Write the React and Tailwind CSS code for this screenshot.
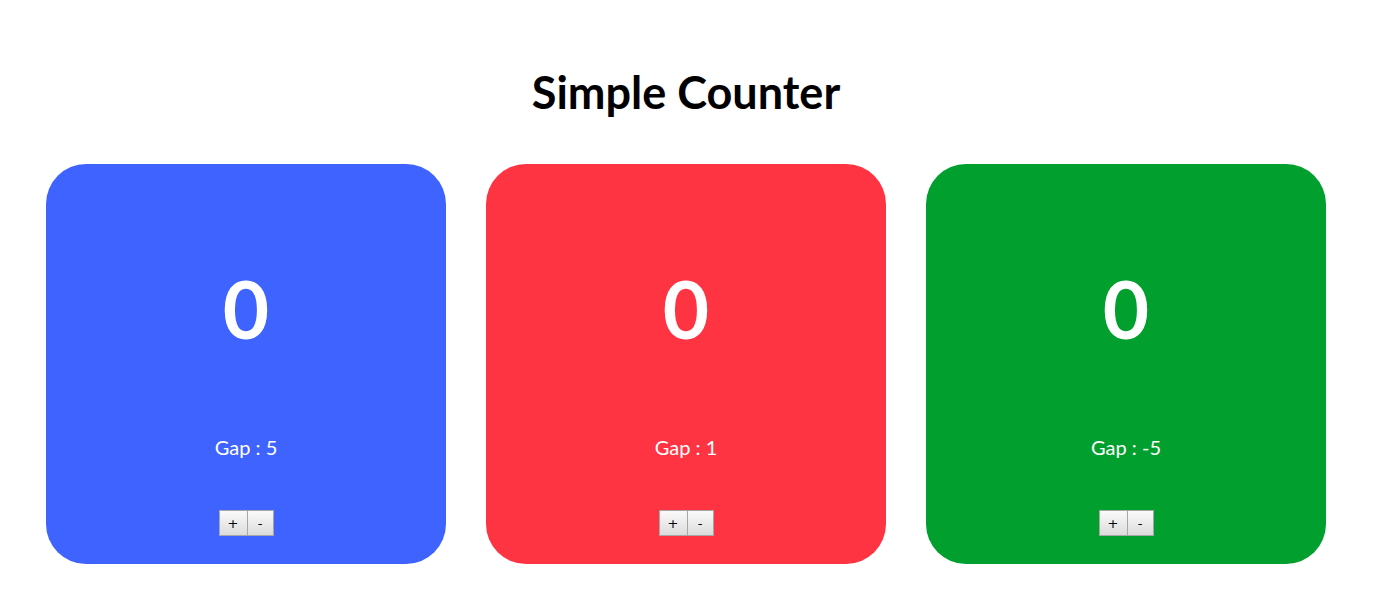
import { useState } from 'react'

const cards = [
  { color: 'bg-[#3f63fe]', gap: 5 },
  { color: 'bg-[#ff3443]', gap: 1 },
  { color: 'bg-[#019f2e]', gap: -5 },
]

function Counter({ color, gap }) {
  const [count, setCount] = useState(0)

  return (
    <div className={`${color} w-[400px] h-[400px] rounded-[40px] flex flex-col items-center text-white`}>
      <div className="h-[250px] pt-[38px] flex items-center justify-center">
        <span className="text-[80px] font-bold leading-none">{count}</span>
      </div>
      <p className="mt-[19px] text-[20px] leading-[28px]">Gap : {gap}</p>
      <div className="mt-[49px] flex font-['DejaVu_Sans',sans-serif]">
        <button
          onClick={() => setCount(count + gap)}
          className="w-[29px] h-[26px] text-black text-[13px] font-normal leading-none border border-[#a6a6a6] bg-gradient-to-b from-[#fafafa] to-[#dcdcdc]"
        >
          +
        </button>
        <button
          onClick={() => setCount(count - gap)}
          className="w-[26px] h-[26px] text-black text-[13px] font-normal leading-none border border-[#a6a6a6] border-l-0 bg-gradient-to-b from-[#fafafa] to-[#dcdcdc]"
        >
          -
        </button>
      </div>
    </div>
  )
}

export default function App() {
  return (
    <div className="min-h-screen bg-white font-['Lato',sans-serif]">
      <div className="w-[1372px]">
        <h1 className="pt-[65px] text-center text-[45px] font-bold leading-[54px] text-black">
          Simple Counter
        </h1>
        <div className="mt-[45px] flex justify-center gap-10">
          {cards.map((c, i) => (
            <Counter key={i} color={c.color} gap={c.gap} />
          ))}
        </div>
      </div>
    </div>
  )
}
